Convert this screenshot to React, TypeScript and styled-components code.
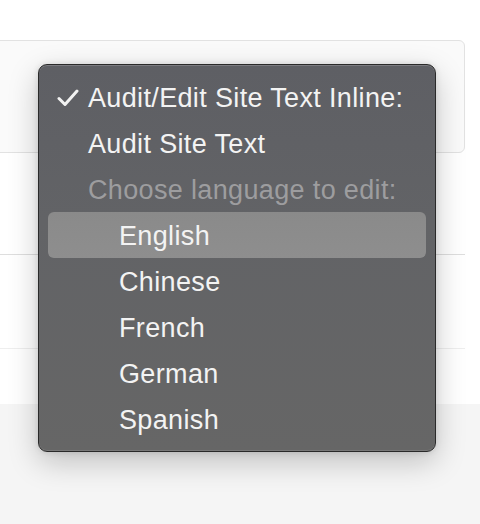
import React from "react";
import styled, { createGlobalStyle } from "styled-components";

const GlobalStyle = createGlobalStyle`
  html, body {
    margin: 0;
    padding: 0;
    background: #ffffff;
  }
  body {
    font-family: "Liberation Sans", Arial, sans-serif;
  }
`;

interface MenuItemInterface {
  label: string;
  checked?: boolean;
  disabled?: boolean;
  indent?: boolean;
  active?: boolean;
}

const items: MenuItemInterface[] = [
  { label: "Audit/Edit Site Text Inline:", checked: true },
  { label: "Audit Site Text" },
  { label: "Choose language to edit:", disabled: true },
  { label: "English", indent: true, active: true },
  { label: "Chinese", indent: true },
  { label: "French", indent: true },
  { label: "German", indent: true },
  { label: "Spanish", indent: true },
];

const CheckMark = () => (
  <svg width="22" height="18" viewBox="0 0 22 18">
    <path
      d="M2 9.5 L8 15.5 L20 2"
      fill="none"
      stroke="#f2f2f2"
      strokeWidth="3"
      strokeLinecap="round"
      strokeLinejoin="round"
    />
  </svg>
);

const App: React.FunctionComponent = () => {
  return (
    <>
      <GlobalStyle />
      <Page>
        <TopSpace />
        <Card />
        <Section $height={101} $line="#dedede" />
        <Section $height={93} $line="#eeeeee" />
        <Section $height={55} />
        <Footer />
        <Menu>
          {items.map((item, index) => (
            <Item
              key={index}
              $active={!!item.active}
              $disabled={!!item.disabled}
              $indent={!!item.indent}
            >
              <Check>{item.checked && <CheckMark />}</Check>
              {item.label}
            </Item>
          ))}
        </Menu>
      </Page>
    </>
  );
};

const Page = styled.div`
  position: relative;
  width: 480px;
  height: 524px;
  overflow: hidden;
  display: flex;
  flex-direction: column;
  background: #ffffff;
`;

const TopSpace = styled.div`
  height: 40px;
  flex: none;
`;

const Card = styled.div`
  flex: none;
  height: 111px;
  margin-left: -10px;
  width: 473px;
  border: 1px solid #e2e2e2;
  border-radius: 6px;
  background: #fafafa;
`;

const Section = styled.div<{ $height: number; $line?: string }>`
  flex: none;
  height: ${({ $height }) => $height}px;
  width: 465px;
  border-bottom: ${({ $line }) => ($line ? `1px solid ${$line}` : "none")};
`;

const Footer = styled.div`
  flex: 1;
  background: #f5f5f5;
`;

const Menu = styled.div`
  position: absolute;
  left: 38px;
  top: 64px;
  width: 378px;
  padding: 9px 9px;
  border: 1px solid #2a2a2a;
  border-radius: 9px;
  background: linear-gradient(180deg, #5e5f64 0%, #626366 40%, #666666 100%);
  box-shadow:
    inset 0 1px 0 rgba(255, 255, 255, 0.18),
    inset 0 -1px 0 rgba(255, 255, 255, 0.12),
    0 10px 30px rgba(0, 0, 0, 0.22),
    0 0 6px rgba(0, 0, 0, 0.12);
  display: flex;
  flex-direction: column;
`;

const Item = styled.div<{ $active: boolean; $disabled: boolean; $indent: boolean }>`
  height: 46px;
  display: flex;
  align-items: center;
  padding-top: 2px;
  box-sizing: border-box;
  padding-left: ${({ $indent }) => ($indent ? "40px" : "9px")};
  border-radius: 6px;
  font-size: 27px;
  letter-spacing: 0.35px;
  color: ${({ $disabled }) => ($disabled ? "#9d9d9f" : "#f3f3f3")};
  background: ${({ $active }) =>
    $active ? "linear-gradient(180deg, #8a8a8a, #8e8e8e)" : "transparent"};
`;

const Check = styled.span`
  width: 31px;
  flex: none;
  display: flex;
  align-items: center;
`;

export default App;
